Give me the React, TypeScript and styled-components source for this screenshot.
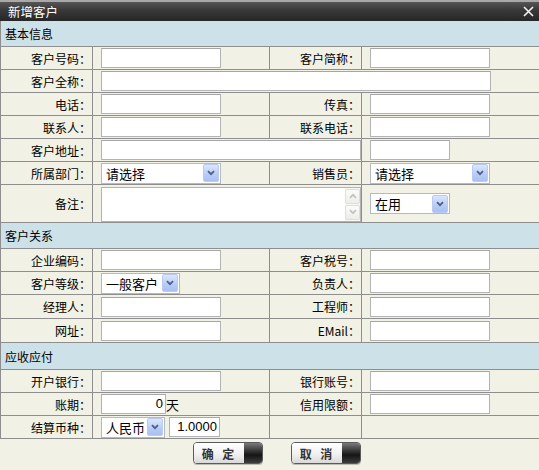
import React from 'react';
import styled, { createGlobalStyle } from 'styled-components';

const GlobalStyle = createGlobalStyle`
  html, body {
    margin: 0;
    padding: 0;
    background: #f1f1e5;
  }
  * { box-sizing: border-box; }
`;

const LINE = '#8e8e8e';
const CJK = `"Noto Sans CJK SC", "Liberation Sans", sans-serif`;

const Dialog = styled.div`
  width: 539px;
  height: 470px;
  overflow: hidden;
  background: #f1f1e5;
  font-family: ${CJK};
  font-size: 12px;
  color: #000;
`;

const TitleBar = styled.div`
  height: 21px;
  display: flex;
  align-items: center;
  justify-content: space-between;
  padding: 0 5px 0 8px;
  border-top: 2px solid #a9a9a9;
  background: linear-gradient(#555555, #3a3a3a 40%, #262626);
  color: #fff;
  font-size: 12.5px;
`;

const CloseIcon = () => (
  <svg width="11" height="11" viewBox="0 0 11 11">
    <path d="M1 1 L10 10 M10 1 L1 10" stroke="#f2f2f2" strokeWidth="1.6" />
  </svg>
);

const Section = styled.div<{ $h: number }>`
  height: ${p => p.$h}px;
  display: flex;
  align-items: center;
  padding-left: 4px;
  background: #cde1e9;
  border-left: 1px solid ${LINE};
  border-bottom: 1px solid ${LINE};
`;

const Row = styled.div<{ $h?: number }>`
  display: grid;
  grid-template-columns: 92px 177px 92px 178px;
  height: ${p => p.$h ?? 23}px;
  border-bottom: 1px solid ${LINE};
`;

const Cell = styled.div<{ $span?: number; $label?: boolean }>`
  grid-column: span ${p => p.$span ?? 1};
  display: flex;
  align-items: center;
  gap: 4px;
  border-left: 1px solid ${LINE};
  justify-content: ${p => (p.$label ? 'flex-end' : 'flex-start')};
  padding: ${p => (p.$label ? '0 1px 0 0' : '0 0 0 8px')};
  white-space: nowrap;
`;

const Input = styled.div<{ $w: number; $right?: boolean }>`
  width: ${p => p.$w}px;
  height: 20px;
  background: #fff;
  border: 1px solid #b3b3b3;
  border-top-color: #a6a6a6;
  font-family: "Liberation Sans", ${CJK};
  font-size: 13px;
  line-height: 18px;
  padding: 0 2px;
  text-align: ${p => (p.$right ? 'right' : 'left')};
`;

const Joined = styled.div`
  display: flex;
  align-items: center;
  font-size: 13px;
`;

const SelectBox = styled.div<{ $w: number }>`
  width: ${p => p.$w}px;
  height: 21px;
  display: flex;
  align-items: center;
  background: #fff;
  border: 1px solid #b4b9c2;
  font-size: 13px;
`;

const SelectText = styled.span`
  flex: 1;
  padding-left: 4px;
`;

const SelectButton = styled.span`
  width: 16px;
  height: 18px;
  margin-right: 1px;
  display: flex;
  align-items: center;
  justify-content: center;
  border-radius: 2px;
  background: linear-gradient(#dce6fd, #b7cbf6 60%, #a9c0f2);
  border: 1px solid #b9cbf3;
`;

const Chevron = ({ color = '#4d5f88' }: { color?: string }) => (
  <svg width="8" height="6" viewBox="0 0 8 6">
    <path d="M1 1.2 L4 4.2 L7 1.2" fill="none" stroke={color} strokeWidth="1.8" />
  </svg>
);

const Select = ({ w, value }: { w: number; value: string }) => (
  <SelectBox $w={w}>
    <SelectText>{value}</SelectText>
    <SelectButton>
      <Chevron />
    </SelectButton>
  </SelectBox>
);

const TextArea = styled.div`
  width: 260px;
  height: 35px;
  margin-top: 1px;
  display: flex;
  justify-content: flex-end;
  background: #fff;
  border: 1px solid #b3b3b3;
`;

const ScrollBar = styled.div`
  width: 15px;
  display: flex;
  flex-direction: column;
  justify-content: space-between;
  padding: 1px 0;
  background: #f7f7f3;
`;

const ScrollArrow = styled.span<{ $up?: boolean }>`
  height: 15px;
  display: flex;
  align-items: center;
  justify-content: center;
  border: 1px solid #dedede;
  border-radius: 2px;
  background: linear-gradient(#fbfbf8, #eeeee8);
  svg { transform: ${p => (p.$up ? 'rotate(180deg)' : 'none')}; }
`;

const Footer = styled.div`
  display: flex;
  justify-content: center;
  gap: 28px;
  padding: 3px 0 0 14px;
`;

const ActionButton = styled.div`
  width: 70px;
  height: 22px;
  display: flex;
  border: 1px solid #5a5a5a;
  border-radius: 4px;
  overflow: hidden;
  box-shadow: 0 1px 0 #bdbdb3;
`;

const ButtonFace = styled.span`
  flex: 1;
  display: flex;
  align-items: center;
  justify-content: center;
  background: linear-gradient(#ffffff, #f1f1f1 55%, #d9d9d9);
  color: #333;
  font-weight: bold;
  font-size: 12px;
  letter-spacing: 1px;
  word-spacing: 4px;
`;

const ButtonKnob = styled.span`
  width: 18px;
  background: linear-gradient(#7a7a7a, #2c2c2c 45%, #151515 60%, #3b3b3b);
`;

const Button = ({ text }: { text: string }) => (
  <ActionButton>
    <ButtonFace>{text}</ButtonFace>
    <ButtonKnob />
  </ActionButton>
);

export default function App() {
  return (
    <Dialog>
      <GlobalStyle />
      <TitleBar>
        <span>新增客户</span>
        <CloseIcon />
      </TitleBar>

      <Section $h={26}>基本信息</Section>
      <Row>
        <Cell $label>客户号码：</Cell>
        <Cell><Input $w={120} /></Cell>
        <Cell $label>客户简称：</Cell>
        <Cell><Input $w={120} /></Cell>
      </Row>
      <Row>
        <Cell $label>客户全称：</Cell>
        <Cell $span={3}><Input $w={390} /></Cell>
      </Row>
      <Row>
        <Cell $label>电话：</Cell>
        <Cell><Input $w={120} /></Cell>
        <Cell $label>传真：</Cell>
        <Cell><Input $w={120} /></Cell>
      </Row>
      <Row>
        <Cell $label>联系人：</Cell>
        <Cell><Input $w={120} /></Cell>
        <Cell $label>联系电话：</Cell>
        <Cell><Input $w={120} /></Cell>
      </Row>
      <Row>
        <Cell $label>客户地址：</Cell>
        <Cell $span={2}><Input $w={260} /></Cell>
        <Cell><Input $w={80} /></Cell>
      </Row>
      <Row>
        <Cell $label>所属部门：</Cell>
        <Cell><Select w={120} value="请选择" /></Cell>
        <Cell $label>销售员：</Cell>
        <Cell><Select w={120} value="请选择" /></Cell>
      </Row>
      <Row $h={38}>
        <Cell $label>备注：</Cell>
        <Cell $span={2}>
          <TextArea>
            <ScrollBar>
              <ScrollArrow $up><Chevron color="#c3c3c3" /></ScrollArrow>
              <ScrollArrow><Chevron color="#c3c3c3" /></ScrollArrow>
            </ScrollBar>
          </TextArea>
        </Cell>
        <Cell><Select w={80} value="在用" /></Cell>
      </Row>

      <Section $h={26}>客户关系</Section>
      <Row>
        <Cell $label>企业编码：</Cell>
        <Cell><Input $w={120} /></Cell>
        <Cell $label>客户税号：</Cell>
        <Cell><Input $w={120} /></Cell>
      </Row>
      <Row>
        <Cell $label>客户等级：</Cell>
        <Cell><Select w={79} value="一般客户" /></Cell>
        <Cell $label>负责人：</Cell>
        <Cell><Input $w={120} /></Cell>
      </Row>
      <Row $h={24}>
        <Cell $label>经理人：</Cell>
        <Cell><Input $w={120} /></Cell>
        <Cell $label>工程师：</Cell>
        <Cell><Input $w={120} /></Cell>
      </Row>
      <Row $h={24}>
        <Cell $label>网址：</Cell>
        <Cell><Input $w={120} /></Cell>
        <Cell $label>EMail：</Cell>
        <Cell><Input $w={120} /></Cell>
      </Row>

      <Section $h={27}>应收应付</Section>
      <Row>
        <Cell $label>开户银行：</Cell>
        <Cell><Input $w={120} /></Cell>
        <Cell $label>银行账号：</Cell>
        <Cell><Input $w={120} /></Cell>
      </Row>
      <Row>
        <Cell $label>账期：</Cell>
        <Cell>
          <Joined>
            <Input $w={65} $right>0</Input>天
          </Joined>
        </Cell>
        <Cell $label>信用限额：</Cell>
        <Cell><Input $w={120} /></Cell>
      </Row>
      <Row>
        <Cell $label>结算币种：</Cell>
        <Cell>
          <Select w={64} value="人民币" />
          <Input $w={51} $right>1.0000</Input>
        </Cell>
        <Cell />
        <Cell />
      </Row>

      <Footer>
        <Button text="确 定" />
        <Button text="取 消" />
      </Footer>
    </Dialog>
  );
}
